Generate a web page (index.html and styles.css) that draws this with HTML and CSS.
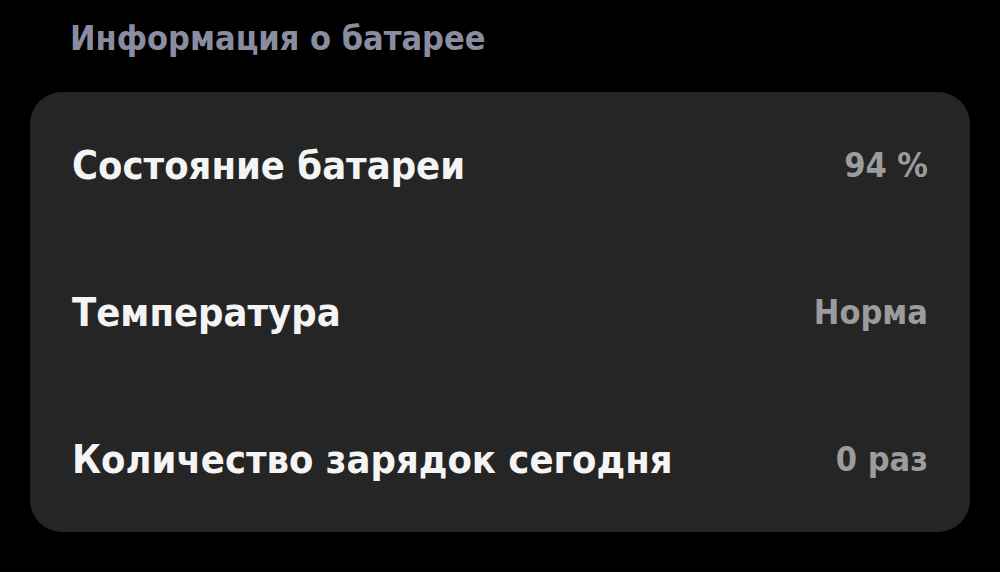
FILE: index.html
```html
<!DOCTYPE html>
<html lang="ru">
<head>
<meta charset="utf-8">
<link rel="stylesheet" href="styles.css">
</head>
<body>
<div class="page">
  <h1 class="title">Информация о батарее</h1>
  <div class="card">
    <div class="row"><span class="label">Состояние батареи</span><span class="value">94 %</span></div>
    <div class="row"><span class="label">Температура</span><span class="value">Норма</span></div>
    <div class="row"><span class="label">Количество зарядок сегодня</span><span class="value">0 раз</span></div>
  </div>
</div>
</body>
</html>
```
FILE: styles.css
```css
html, body {
  margin: 0;
  padding: 0;
  background: #000;
}
.page {
  width: 1000px;
  height: 572px;
  padding: 0 30px;
  box-sizing: border-box;
  font-family: "DejaVu Sans Condensed", "DejaVu Sans", sans-serif;
  font-weight: bold;
}
.title {
  margin: 0;
  padding: 18px 0 0 40px;
  height: 92px;
  box-sizing: border-box;
  font-size: 34px;
  line-height: 40px;
  color: #8a8da0;
  font-weight: bold;
}
.card {
  background: #252525;
  border-radius: 32px;
  height: 440px;
  padding: 0 42px;
  display: flex;
  flex-direction: column;
  justify-content: space-around;
}
.row {
  display: flex;
  justify-content: space-between;
  align-items: center;
}
.label {
  color: #f4f4f4;
  font-size: 39.5px;
}
.value {
  color: #9c9c9c;
  font-size: 34px;
}
```
